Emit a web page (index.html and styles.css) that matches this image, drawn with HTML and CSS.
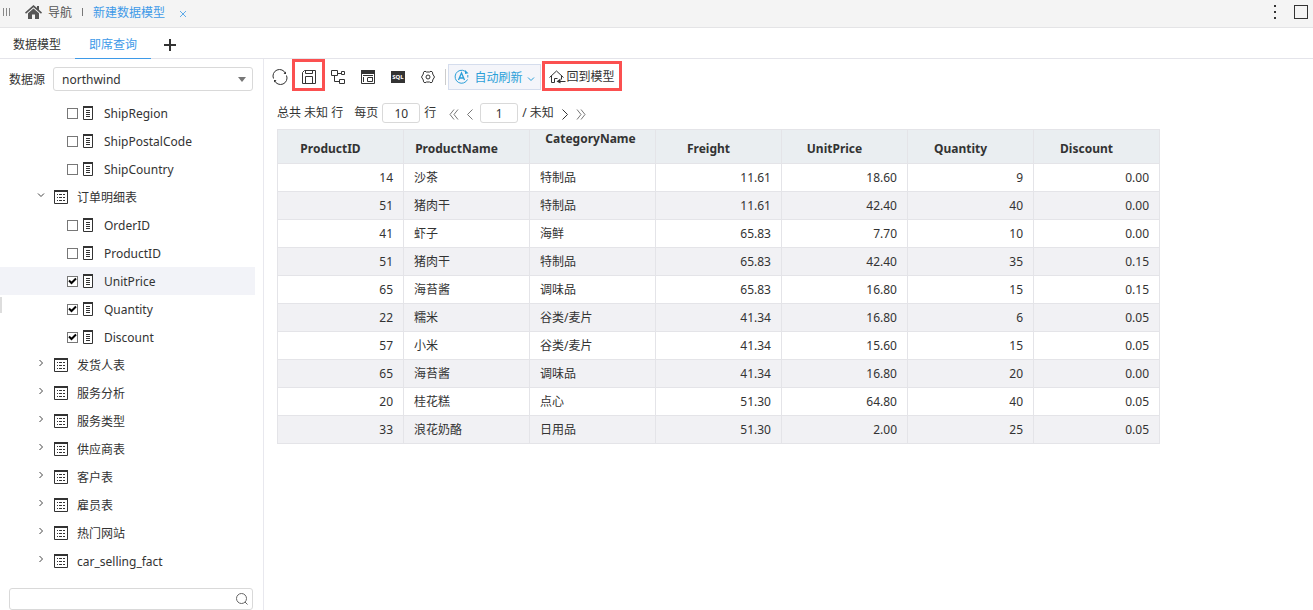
FILE: index.html
```
<!DOCTYPE html>
<html lang="zh-CN">
<head>
    <meta charset="UTF-8">
    <meta name="viewport" content="width=device-width, initial-scale=1.0">
    <title>新建数据模型</title>
    <link rel="stylesheet" href="styles.css">
</head>
<body>

    <!-- Shared icons -->
    <svg class="sprite" aria-hidden="true">
        <symbol id="icon-field" viewBox="0 0 10 14">
            <path d="M.5 1v12.500h9V1" fill="#fff" stroke="#333"/>
            <path d="M0 1h10" stroke="#333" stroke-width="2"/>
            <path d="M3 4.500h4M3 6.500h4M3 8.500h4M3 10.500h4" stroke="#333"/>
        </symbol>
        <symbol id="icon-table" viewBox="0 0 14 14">
            <path d="M.5 1v12.500h13V1" fill="#fff" stroke="#333"/>
            <path d="M0 1h14" stroke="#333" stroke-width="2"/>
            <path d="M3 4.500h1m1 0h3m1 0h2M3 7.500h1m1 0h3m1 0h2M3 10.500h1m1 0h3m1 0h2" stroke="#333"/>
        </symbol>
        <symbol id="icon-closed" viewBox="0 0 8 8">
            <path d="M2.500 1l3 3-3 3" fill="none" stroke="#444"/>
        </symbol>
        <symbol id="icon-open" viewBox="0 0 8 8">
            <path d="M1 2.500l3 3 3-3" fill="none" stroke="#444"/>
        </symbol>
        <symbol id="icon-check" viewBox="0 0 9 9">
            <path d="M1 3.500l2.500 2.500L8 1.500" fill="none" stroke="#000" stroke-width="2"/>
        </symbol>
    </svg>

    <header class="topbar">
        <span class="grip"></span>
        <a class="home" href="#">
            <svg width="17" height="15" viewBox="0 0 17 15">
                <path d="M8.500 0L0 7.500l1 1.200L8.500 2.200 16 8.700l1-1.200-3-2.700V1h-2v2z" fill="#555"/>
                <path d="M8.500 3.500L3 8.300V14h4V9.500h3V14h4V8.300z" fill="#555"/>
            </svg>
            <span>导航</span>
        </a>
        <span class="bar"></span>
        <a class="current" href="#">新建数据模型</a>
        <button class="close" aria-label="关闭">
            <svg width="8" height="8" viewBox="0 0 8 8"><path d="M1 1l6 6M7 1L1 7" stroke="#5fabe9"/></svg>
        </button>
        <button class="more" aria-label="更多">
            <svg width="2" height="14" viewBox="0 0 2 14"><path d="M0 0h2v2H0zM0 6h2v2H0zM0 12h2v2H0z" fill="#333"/></svg>
        </button>
        <button class="maximize" aria-label="最大化"></button>
    </header>

    <nav class="tabs">
        <a href="#">数据模型</a>
        <a class="active" href="#">即席查询</a>
        <button aria-label="新增">
            <svg width="12" height="12" viewBox="0 0 12 12"><path d="M0 6h12M6 0v12" stroke="#333" stroke-width="2"/></svg>
        </button>
    </nav>

    <div class="content">
        <aside class="sidebar">
            <div class="source">
                <label for="source">数据源</label>
                <div class="select">
                    <select id="source"><option>northwind</option></select>
                </div>
            </div>

            <ul class="tree">
                <li class="field"><input type="checkbox" id="f1"><svg><use href="#icon-field"/></svg><label for="f1">ShipRegion</label></li>
                <li class="field"><input type="checkbox" id="f2"><svg><use href="#icon-field"/></svg><label for="f2">ShipPostalCode</label></li>
                <li class="field"><input type="checkbox" id="f3"><svg><use href="#icon-field"/></svg><label for="f3">ShipCountry</label></li>
                <li class="group"><svg class="arrow"><use href="#icon-open"/></svg><svg><use href="#icon-table"/></svg><span>订单明细表</span></li>
                <li class="field"><input type="checkbox" id="f4"><svg><use href="#icon-field"/></svg><label for="f4">OrderID</label></li>
                <li class="field"><input type="checkbox" id="f5"><svg><use href="#icon-field"/></svg><label for="f5">ProductID</label></li>
                <li class="field selected"><input type="checkbox" id="f6" checked><svg class="check"><use href="#icon-check"/></svg><svg><use href="#icon-field"/></svg><label for="f6">UnitPrice</label></li>
                <li class="field"><input type="checkbox" id="f7" checked><svg class="check"><use href="#icon-check"/></svg><svg><use href="#icon-field"/></svg><label for="f7">Quantity</label></li>
                <li class="field"><input type="checkbox" id="f8" checked><svg class="check"><use href="#icon-check"/></svg><svg><use href="#icon-field"/></svg><label for="f8">Discount</label></li>
                <li class="group"><svg class="arrow"><use href="#icon-closed"/></svg><svg><use href="#icon-table"/></svg><span>发货人表</span></li>
                <li class="group"><svg class="arrow"><use href="#icon-closed"/></svg><svg><use href="#icon-table"/></svg><span>服务分析</span></li>
                <li class="group"><svg class="arrow"><use href="#icon-closed"/></svg><svg><use href="#icon-table"/></svg><span>服务类型</span></li>
                <li class="group"><svg class="arrow"><use href="#icon-closed"/></svg><svg><use href="#icon-table"/></svg><span>供应商表</span></li>
                <li class="group"><svg class="arrow"><use href="#icon-closed"/></svg><svg><use href="#icon-table"/></svg><span>客户表</span></li>
                <li class="group"><svg class="arrow"><use href="#icon-closed"/></svg><svg><use href="#icon-table"/></svg><span>雇员表</span></li>
                <li class="group"><svg class="arrow"><use href="#icon-closed"/></svg><svg><use href="#icon-table"/></svg><span>热门网站</span></li>
                <li class="group"><svg class="arrow"><use href="#icon-closed"/></svg><svg><use href="#icon-table"/></svg><span>car_selling_fact</span></li>
            </ul>

            <div class="search">
                <input type="text" aria-label="搜索">
                <svg width="12" height="12" viewBox="0 0 12 12"><circle cx="5.500" cy="5.500" r="5" fill="none" stroke="#666"/><path d="M9 9l2.500 2.500" stroke="#666"/></svg>
            </div>
            <span class="handle"></span>
        </aside>

        <main class="main">
            <div class="toolbar">
                <button class="tool refresh" aria-label="刷新">
                    <svg width="16" height="16" viewBox="0 0 16 16" fill="none" stroke="#333">
                        <path d="M1.500 9.500A6.500 6.500 0 0 1 13.500 4.500M14.500 6.500A6.500 6.500 0 0 1 2.500 11.500"/>
                        <path d="M14 2.500v2.500h-2.500zM2 13.500V11h2.500z" fill="#333" stroke="none"/>
                    </svg>
                </button>
                <button class="tool marked" aria-label="保存">
                    <svg width="14" height="14" viewBox="0 0 14 14" fill="none" stroke="#333">
                        <path d="M.5 2.500l2-2h11v13H.5zM3.500.5v3h7v-3M3.500 13.500v-7h7v7"/>
                    </svg>
                </button>
                <button class="tool" aria-label="关系">
                    <svg width="14" height="14" viewBox="0 0 14 14" fill="none" stroke="#333">
                        <path d="M.5.500h6v5h-6zM10.500 1.500h3v3h-3zM8.500 9.500h5v4h-5zM7 3.500h3M3.500 6v5.500h5"/>
                    </svg>
                </button>
                <button class="tool" aria-label="查询设置">
                    <svg width="14" height="14" viewBox="0 0 14 14" fill="none" stroke="#333">
                        <path d="M.5.500h13v13H.5z"/><path d="M0 2h14" stroke-width="4"/>
                        <path d="M2 5.500h10M2.500 7v5M6.500 7.500H12M6.500 8v3.500h5V8"/>
                    </svg>
                </button>
                <button class="tool" aria-label="查看 SQL">
                    <span class="sql">SQL</span>
                </button>
                <button class="tool" aria-label="设置">
                    <svg width="14" height="14" viewBox="0 0 14 14" fill="none" stroke="#333">
                        <path d="M4 1.200l1.500.8h3l1.500-.8 1.500 1 .2 1.800 1.800 3-1.800 3-.2 1.800-1.500 1L8.500 12h-3l-1.500.8-1.500-1-.2-1.800L.5 7l1.800-3 .2-1.800z"/>
                        <circle cx="7" cy="7" r="2"/>
                    </svg>
                </button>
                <span class="divider"></span>
                <button class="auto">
                    <svg width="16" height="16" viewBox="0 0 16 16" fill="none" stroke="#2b9fd8">
                        <path d="M11 2.200A6.500 6.500 0 1 0 13.500 10.500M13.800 6v2.500"/>
                        <path d="M4.500 11L7.500 4l3 7M5.500 9h4" stroke-width="1.300"/>
                        <path d="M11 1l3.500 3.200L11 5z" fill="#2b9fd8" stroke="none"/>
                    </svg>
                    <span>自动刷新</span>
                    <svg width="8" height="6" viewBox="0 0 8 6" fill="none" stroke="#2b9fd8"><path d="M1 1.500l3 3 3-3"/></svg>
                </button>
                <button class="back marked">
                    <svg width="17" height="14" viewBox="0 0 17 14" fill="none" stroke="#333">
                        <path d="M.5 7.500l7-6.500 7 6.500M2.500 6v6.500h3v-4h3M12.500 5.500v4M16.500 11.500H9"/><path d="M11.500 8.500l-4 3 4 2z" fill="#333" stroke="none"/>
                    </svg>
                    <span>回到模型</span>
                </button>
            </div>

            <div class="pager">
                <span>总共 未知 行</span>
                <label class="per-page" for="rows">每页</label>
                <input id="rows" type="text" value="10">
                <span>行</span>
                <button class="first" aria-label="首页"><svg width="10" height="11" viewBox="0 0 10 11"><path d="M5 .5l-4 5 4 5M9 .5l-4 5 4 5" fill="none" stroke="#777"/></svg></button>
                <button class="prev" aria-label="上一页"><svg width="8" height="11" viewBox="0 0 8 11"><path d="M6.500.5l-5 5 5 5" fill="none" stroke="#777"/></svg></button>
                <input type="text" value="1" aria-label="页码">
                <span>/ 未知</span>
                <button class="next" aria-label="下一页"><svg width="8" height="11" viewBox="0 0 8 11"><path d="M1.500.5l5 5-5 5" fill="none" stroke="#333"/></svg></button>
                <button class="last" aria-label="末页"><svg width="10" height="11" viewBox="0 0 10 11"><path d="M1 .5l4 5-4 5M5 .5l4 5-4 5" fill="none" stroke="#777"/></svg></button>
            </div>

            <table class="result">
                <thead>
                    <tr>
                        <th>ProductID<i></i></th>
                        <th>ProductName<i></i></th>
                        <th class="wrap">CategoryName <i></i></th>
                        <th>Freight<i></i></th>
                        <th>UnitPrice<i></i></th>
                        <th>Quantity<i></i></th>
                        <th>Discount<i></i></th>
                    </tr>
                </thead>
                <tbody>
                    <tr><td>14</td><td>沙茶</td><td>特制品</td><td>11.61</td><td>18.60</td><td>9</td><td>0.00</td></tr>
                    <tr><td>51</td><td>猪肉干</td><td>特制品</td><td>11.61</td><td>42.40</td><td>40</td><td>0.00</td></tr>
                    <tr><td>41</td><td>虾子</td><td>海鲜</td><td>65.83</td><td>7.70</td><td>10</td><td>0.00</td></tr>
                    <tr><td>51</td><td>猪肉干</td><td>特制品</td><td>65.83</td><td>42.40</td><td>35</td><td>0.15</td></tr>
                    <tr><td>65</td><td>海苔酱</td><td>调味品</td><td>65.83</td><td>16.80</td><td>15</td><td>0.15</td></tr>
                    <tr><td>22</td><td>糯米</td><td>谷类/麦片</td><td>41.34</td><td>16.80</td><td>6</td><td>0.05</td></tr>
                    <tr><td>57</td><td>小米</td><td>谷类/麦片</td><td>41.34</td><td>15.60</td><td>15</td><td>0.05</td></tr>
                    <tr><td>65</td><td>海苔酱</td><td>调味品</td><td>41.34</td><td>16.80</td><td>20</td><td>0.00</td></tr>
                    <tr><td>20</td><td>桂花糕</td><td>点心</td><td>51.30</td><td>64.80</td><td>40</td><td>0.05</td></tr>
                    <tr><td>33</td><td>浪花奶酪</td><td>日用品</td><td>51.30</td><td>2.00</td><td>25</td><td>0.05</td></tr>
                </tbody>
            </table>
        </main>
    </div>

</body>
</html>
```
FILE: styles.css
```
* {
    box-sizing: border-box;
}

body {
    margin: 0;
    height: 100vh;
    display: flex;
    flex-direction: column;
    overflow: hidden;
    background: #fff;
    color: #333;
    font: 12px/18px "Noto Sans", "Noto Sans CJK SC", sans-serif;
}

a {
    color: inherit;
    text-decoration: none;
}

button {
    display: flex;
    align-items: center;
    justify-content: center;
    padding: 0;
    border: 0;
    background: none;
    color: inherit;
    font: inherit;
    cursor: pointer;
}

input,
select {
    font: inherit;
    color: inherit;
}

svg {
    flex: none;
}

.sprite {
    display: none;
}

/* Top bar */
.topbar {
    display: flex;
    align-items: center;
    height: 28px;
    flex: none;
    padding: 0 5px 3px 3px;
    background: #f4f4f4;
    border-bottom: 1px solid #e4e4e6;
}

.topbar a {
    padding-top: 2px;
}

.grip {
    width: 7px;
    height: 8px;
    border: solid #888;
    border-width: 0 1px;
    background: linear-gradient(#888, #888) center / 1px 100% no-repeat;
}

.home {
    display: flex;
    align-items: center;
    gap: 6px;
    margin-left: 15px;
    color: #555;
}

.home svg {
    margin-bottom: 2px;
}

.bar {
    width: 1px;
    height: 8px;
    margin: 0 10px;
    background: #777;
}

.current {
    color: #3e9ae8;
}

.close {
    margin: 3px 0 0 14px;
}

.more {
    margin-left: auto;
}

.maximize {
    width: 14px;
    height: 14px;
    margin-left: 18px;
    border: 1px solid #333;
}

/* Tabs */
.tabs {
    display: flex;
    align-items: center;
    flex: none;
    height: 31px;
    border-bottom: 1px solid #e4e4ea;
}

.tabs a {
    height: 31px;
    padding: 0 14px;
    line-height: 34px;
}

.tabs a:first-child {
    padding-left: 13px;
}

.tabs .active {
    color: #3e9ae8;
    border-bottom: 1px solid #3e9ae8;
}

.tabs button {
    margin: 3px 0 0 13px;
}

.content {
    display: flex;
    flex: 1;
    min-height: 0;
}

/* Sidebar */
.sidebar {
    position: relative;
    display: flex;
    flex-direction: column;
    flex: none;
    width: 264px;
    padding-top: 8px;
    border-right: 1px solid #e8e8ee;
}

.source {
    display: flex;
    align-items: center;
    gap: 8px;
    padding: 0 10px 0 9px;
}

.source label {
    padding-top: 2px;
}

.select {
    position: relative;
    flex: 1;
}

.select select {
    display: block;
    width: 100%;
    height: 24px;
    padding: 1px 8px 0;
    border: 1px solid #d9d9d9;
    border-radius: 3px;
    background: #fff;
    appearance: none;
}

.select::after {
    content: "";
    position: absolute;
    top: 10px;
    right: 7px;
    border: 4px solid transparent;
    border-top: 5px solid #777;
    border-bottom: 0;
    pointer-events: none;
}

.tree {
    flex: 1;
    min-height: 0;
    overflow: hidden;
    margin: 8px 8px 0 0;
    padding: 0;
    list-style: none;
}

.tree li {
    position: relative;
    display: flex;
    align-items: center;
    height: 28px;
}

.tree label,
.tree span {
    padding-top: 2px;
}

.tree .selected {
    background: #f2f3f8;
}

.field {
    padding-left: 67px;
}

.field svg {
    width: 10px;
    height: 14px;
    margin: 0 11px 0 5px;
}

.field input {
    width: 11px;
    height: 11px;
    margin: 0;
    border: 1px solid #777;
    background: #fff;
    appearance: none;
}

/* Tick drawn over the box */
.field .check {
    position: absolute;
    left: 68px;
    width: 9px;
    height: 9px;
    margin: 0;
    pointer-events: none;
}

.field input:not(:checked) + .check {
    display: none;
}

.group {
    padding-left: 37px;
}

.group svg {
    width: 14px;
    height: 14px;
    margin-right: 9px;
}

.group .arrow {
    width: 8px;
    height: 8px;
    margin: 0 9px 4px 0;
}

.search {
    position: relative;
    margin: 8px 10px 0 9px;
}

.search input {
    display: block;
    width: 100%;
    height: 22px;
    padding: 0 24px 0 6px;
    border: 1px solid #d9d9d9;
    border-radius: 3px;
}

.search svg {
    position: absolute;
    top: 5px;
    right: 5px;
}

.handle {
    position: absolute;
    top: 238px;
    left: 0;
    width: 2px;
    height: 16px;
    background: #ddd;
}

/* Query area */
.main {
    flex: 1;
    min-width: 0;
    padding-left: 8px;
}

.toolbar {
    display: flex;
    align-items: center;
    height: 36px;
}

.toolbar span {
    padding-top: 1px;
}

.tool {
    width: 30px;
    height: 32px;
}

.refresh {
    width: 16px;
    margin-right: 4px;
}

.marked {
    border: 3px solid #fb5050;
}

.tool.marked {
    width: 33px;
    margin: 0 -2px 4px 0;
    padding-top: 4px;
}

.toolbar .sql {
    width: 14px;
    height: 12px;
    padding: 0;
    background: #333;
    color: #fff;
    font-size: 6px;
    font-weight: bold;
    line-height: 12px;
    text-align: center;
}

.toolbar .divider {
    width: 1px;
    height: 16px;
    margin: 0 2px;
    background: #ccc;
}

.auto {
    gap: 4px;
    width: 93px;
    height: 26px;
    border: 1px solid #d5dded;
    background: #f4f5fa;
    color: #2b9fd8;
}

.auto svg:last-child {
    margin-top: 3px;
}

.back {
    width: 80px;
    height: 30px;
    margin: 0 0 3px 1px;
    padding-top: 2px;
}

/* Pager */
.pager {
    display: flex;
    align-items: center;
    height: 20px;
    margin: 8px 0 6px;
    padding-left: 5px;
}

.pager input {
    width: 38px;
    height: 20px;
    margin: 0 4px;
    padding: 0;
    border: 1px solid #d9d9d9;
    border-radius: 3px;
    text-align: center;
}

.pager .per-page {
    margin-left: 11px;
}

.first {
    margin: 2px 7px 0 13px;
}

.prev {
    margin: 2px 2px 0 0;
}

.next {
    margin: 2px 7px 0 7px;
}

.last {
    margin-top: 2px;
}

/* Result table */
.result {
    width: 883px;
    margin-left: 5px;
    table-layout: fixed;
    border-collapse: collapse;
}

.result th,
.result td {
    height: 28px;
    padding: 0 10px;
    border: 1px solid #e4e4e8;
    text-align: right;
}

.result th {
    height: 34px;
    padding: 4px 9px 0 7px;
    background: #eaeef1;
    line-height: 16px;
    text-align: center;
}

.result th i {
    display: inline-block;
    width: 18px;
    height: 12px;
}

.result .wrap {
    padding: 0 12px 0 8px;
}

.result td:nth-child(2),
.result td:nth-child(3) {
    text-align: left;
}

.result tbody tr:nth-child(even) {
    background: #f1f1f4;
}
```
